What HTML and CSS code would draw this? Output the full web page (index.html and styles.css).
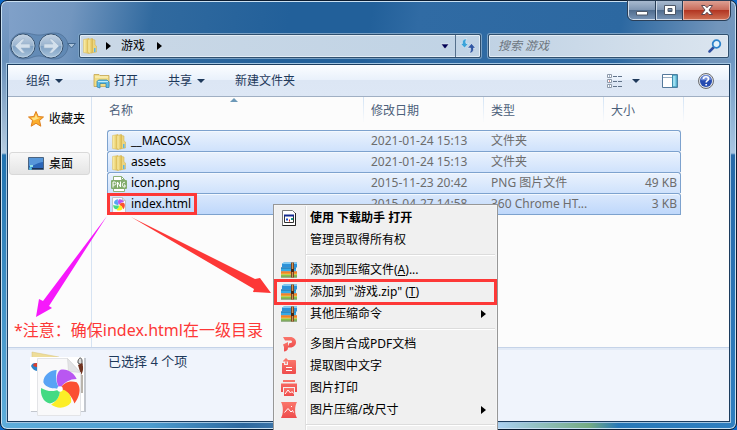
FILE: index.html
```html
<!DOCTYPE html>
<html lang="zh-CN">

<head>
    <meta charset="utf-8">
    <title>游戏</title>
    <link rel="stylesheet" href="styles.css">
</head>

<body>
    <!-- Shared icons -->
    <svg class="defs" width="0" height="0" aria-hidden="true">
        <defs>
            <linearGradient id="gold" x1="0" x2="1">
                <stop offset="0" stop-color="#fdf3b0" />
                <stop offset="1" stop-color="#dcb94c" />
            </linearGradient>
            <linearGradient id="glass" x1="0" y1="0" x2="0" y2="1">
                <stop offset="0" stop-color="#c3d2e3" />
                <stop offset="0.48" stop-color="#9ab4cf" />
                <stop offset="0.5" stop-color="#7d9fc2" />
                <stop offset="1" stop-color="#a9c4dc" />
            </linearGradient>
            <linearGradient id="coral" x1="0" y1="0" x2="0" y2="1">
                <stop offset="0" stop-color="#fa766b" />
                <stop offset="1" stop-color="#ee4c4c" />
            </linearGradient>
            <symbol id="folder" viewBox="0 0 16 16">
                <path d="M9 1l4 1v5l1.500 1v6L9 15z" fill="#ecd57e" stroke="#cfae4a" stroke-width=".5" />
                <path d="M1.500 1.500L7 .5v15l-5.500-1z" fill="url(#gold)" stroke="#d6b755" stroke-width=".5" />
                <path d="M6 1.500L10.500.5v14L7 15.500 6 14z" fill="url(#gold)" stroke="#d0b04c" stroke-width=".5" />
                <path d="M12 10h1.500v4H12z" fill="#5db4e4" />
            </symbol>
            <symbol id="books" viewBox="0 0 16 16">
                <path d="M1 1.500L3 .5h13v5H1z" fill="#2d92d8" />
                <path d="M1 1.500L3 .5h13v1.500H1z" fill="#7dcaf4" />
                <path d="M0 5.500h15v4H0z" fill="#36abe6" />
                <path d="M0 5.500h15v1H0z" fill="#1c6ba8" />
                <path d="M0 9.500h16v3H0z" fill="#f8a02c" />
                <path d="M0 9.500h16v1H0z" fill="#e0662a" />
                <path d="M0 12.500h16v2H0z" fill="#8cc63c" />
                <path d="M0 14.500h16v1H0z" fill="#44792a" />
                <path d="M10 .5h3v15h-3z" fill="#7c4520" />
                <path d="M11 .5h1v15h-1z" fill="#c9965a" />
                <path d="M10 7h3v3h-3z" fill="#4b2712" />
            </symbol>
            <symbol id="pinwheel" viewBox="0 0 36 36">
                <path d="M18 18C12 18 5 17 3 12 3 5 10 1 15 1c-1 6-1 12 3 17z" fill="#58a3f5" />
                <path d="M18 18C14 12 14 5 18 1c6-2 13 3 15 8-6 0-12 3-15 9z" fill="#b957f1" />
                <path d="M18 18c3-6 9-8 15-6 5 5 2 14-2 19-2-6-6-11-13-13z" fill="#fb5031" />
                <path d="M18 18c7 1 11 6 10 12-4 6-13 6-18 2 5-3 8-7 8-14z" fill="#fcee27" />
                <path d="M18 18c0 7-3 12-9 13-6-1-9-8-8-14 5 3 11 4 17 1z" fill="#43da83" />
                <circle cx="18" cy="18" r="2.5" fill="#fff" />
            </symbol>
        </defs>
    </svg>

    <div class="window">
        <header class="titlebar">
            <button class="caption minimize" aria-label="最小化">
                <svg width="12" height="12" viewBox="0 0 12 12"><path d="M.5 7.500h11v3.500H.5z" fill="#fff" stroke="#4e5868" /></svg>
            </button>
            <button class="caption maximize" aria-label="最大化">
                <svg width="12" height="12" viewBox="0 0 12 12"><path d="M.5 1.500h11v9H.5zM4 4.500v3h4v-3z" fill="#fff" fill-rule="evenodd" stroke="#4e5868" /></svg>
            </button>
            <button class="caption close" aria-label="关闭">
                <svg width="12" height="12" viewBox="0 0 12 12"><path d="M.5 1.500h3.500L6 3.700l2-2.200h3.500L8 6l3.500 4.500H8L6 8.300l-2 2.200H.5L4 6z" fill="#fff" stroke="#5b4750" /></svg>
            </button>
        </header>

        <div class="navbar">
            <div class="travel">
                <svg class="travel-back" width="60" height="28" viewBox="0 0 60 28">
                    <path d="M14 1c8 0 10 2 16 2s8-2 16-2c7 0 13 6 13 13s-6 13-13 13c-8 0-10-3-16-3s-8 3-16 3C7 27 1 21 1 14S7 1 14 1z" fill="#5580ad" fill-opacity=".6" stroke="#47698f" stroke-opacity=".6" />
                </svg>
                <button class="round" aria-label="后退">
                    <svg width="26" height="26" viewBox="0 0 26 26">
                        <circle cx="13" cy="13" r="12" fill="url(#glass)" stroke="#38526f" />
                        <circle cx="13" cy="13" r="11" fill="none" stroke="#c3d5e6" stroke-opacity=".7" />
                        <path d="M5 13l7-7h3l-4 5h9v4h-9l4 5h-3z" fill="#d3e0ec" stroke="#9db5cf" stroke-width=".6" />
                    </svg>
                </button>
                <button class="round" aria-label="前进">
                    <svg width="26" height="26" viewBox="0 0 26 26">
                        <circle cx="13" cy="13" r="12" fill="url(#glass)" stroke="#38526f" />
                        <circle cx="13" cy="13" r="11" fill="none" stroke="#c3d5e6" stroke-opacity=".7" />
                        <path d="M21 13l-7-7h-3l4 5H6v4h9l-4 5h3z" fill="#d3e0ec" stroke="#9db5cf" stroke-width=".6" />
                    </svg>
                </button>
                <button class="recent" aria-label="最近的页面">
                    <svg width="9" height="6" viewBox="0 0 9 6"><path d="M.5.500h8l-4 4.500z" fill="#a9c2d9" stroke="#42678e" /></svg>
                </button>
            </div>
            <div class="address">
                <svg width="16" height="16"><use href="#folder" /></svg>
                <svg width="5" height="8" viewBox="0 0 5 8"><path d="M0 0l5 4-5 4z" /></svg>
                <button class="crumb">游戏</button>
                <svg width="5" height="8" viewBox="0 0 5 8"><path d="M0 0l5 4-5 4z" /></svg>
                <button class="history" aria-label="以前的位置">
                    <svg width="10" height="7" viewBox="0 0 10 7"><path d="M1 1h8L5 6z" fill="#000054" stroke="#eef4f9" stroke-width=".6" /></svg>
                </button>
                <button class="refresh" aria-label="刷新">
                    <svg width="16" height="16" viewBox="0 0 16 16">
                        <path d="M6 1C3 1 2 3 2.500 5.500H.5L4.500 10l4-4.500H6C5.500 4 5.500 2.500 7 1z" fill="#3ba3d9" stroke="#f2f8fc" stroke-width=".5" />
                        <path d="M9 15c3.500 0 5-2 4.500-5h2L11.500 5.500l-4 4.500h3c.5 2 .3 3.500-1.500 5z" fill="#3057a3" stroke="#f2f8fc" stroke-width=".5" />
                    </svg>
                </button>
            </div>
            <form class="search">
                <input type="search" aria-label="搜索 游戏" placeholder="搜索 游戏">
                <button type="button" aria-label="搜索">
                    <svg width="14" height="14" viewBox="0 0 14 14">
                        <path d="M1.500 12.500L6 8" stroke="#2f4fa0" stroke-width="2.500" stroke-linecap="round" />
                        <circle cx="8.500" cy="5" r="3.800" fill="#e4f2fb" stroke="#2d83cb" stroke-width="1.800" />
                    </svg>
                </button>
            </form>
        </div>

        <main class="client">
            <div class="toolbar">
                <button>组织 <i class="caret"></i></button>
                <button class="open">
                    <svg width="17" height="16" viewBox="0 0 17 16">
                        <path d="M1 1.500h5l1 1h9v11H1z" fill="#f1dd85" stroke="#c4a450" stroke-width=".8" />
                        <path d="M2 4h13" stroke="#fff8cf" />
                        <path d="M4 14V8.500L5.500 7H14l2 2v5.500h-3V10.500H7V15z" fill="#5fbce6" stroke="#2a7ca9" stroke-width=".7" />
                        <path d="M5 8.500h10" stroke="#c0ecfb" />
                    </svg>
                    打开
                </button>
                <button class="share">共享 <i class="caret"></i></button>
                <button class="new">新建文件夹</button>
                <div class="tools">
                    <button class="view" aria-label="更改您的视图">
                        <svg width="16" height="14" viewBox="0 0 16 14">
                            <path d="M.5.500h4v3h-4zM.5 5.500h4v3h-4zM.5 10.500h4v3h-4z" fill="#fff" stroke="#8d99a9" />
                            <path d="M2 2h1M2 12h1" stroke="#466b94" />
                            <path d="M2 7h1" stroke="#c03d35" />
                            <path d="M6 2.500h4M11 2.500h4M6 7.500h4M11 7.500h4M6 12.500h4M11 12.500h4" stroke="#61738a" />
                        </svg>
                        <i class="caret"></i>
                    </button>
                    <button class="preview" aria-label="显示预览窗格">
                        <svg width="16" height="14" viewBox="0 0 16 14">
                            <path d="M.5.500h15v13H.5z" fill="#fff" stroke="#55799b" />
                            <path d="M1 3.500h9" stroke="#9aafc3" />
                            <path d="M10.500 1h4.500v12h-4.500z" fill="#78cce6" stroke="#3c8cad" />
                            <path d="M12 2v10" stroke="#c3f0fa" />
                        </svg>
                    </button>
                    <button class="help" aria-label="获取帮助">
                        <svg width="16" height="16" viewBox="0 0 16 16">
                            <circle cx="8" cy="8" r="7.500" fill="#dce1e8" stroke="#6c6d70" />
                            <circle cx="8" cy="8" r="6" fill="#264bb0" />
                            <path d="M3 7a5 5 0 0 1 10 0c-4-1-6 1-10 0z" fill="#7793db" />
                            <path d="M5.500 6c0-3 5-3 5 0 0 1.800-2.300 1.500-2.300 3.500M8.200 11v1.500" fill="none" stroke="#fff" stroke-width="1.700" />
                        </svg>
                    </button>
                </div>
            </div>

            <div class="content">
                <nav class="sidebar">
                    <a class="favorites" href="#">
                        <svg width="16" height="16" viewBox="0 0 16 16">
                            <path d="M8 .5l2.200 5 5.300.5-4 3.500 1.300 5.700L8 12.300l-4.800 2.900 1.300-5.700-4-3.500 5.300-.5z" fill="#fbae2d" stroke="#de7f1e" />
                            <path d="M8 3l1.300 3.500 3.200.3-6.800 2.700-2.500-2.700 3.400-.3z" fill="#ffe386" />
                        </svg>
                        收藏夹
                    </a>
                    <a class="desktop" href="#">
                        <svg width="16" height="14" viewBox="0 0 16 14">
                            <path d="M.5.500h15v12H.5z" fill="#2b66b8" stroke="#4b6480" />
                            <path d="M1 1h14v4C10 5 7 9 1 9z" fill="#5797da" />
                            <path d="M1 11h14v1H1z" fill="#1c3354" />
                            <path d="M2 8h3v2H2z" fill="#8fe0e6" />
                            <circle cx="2.500" cy="11.500" r="1.500" fill="#57c3e8" />
                        </svg>
                        桌面
                    </a>
                </nav>

                <section class="files">
                    <table>
                        <thead>
                            <tr>
                                <th class="name">名称</th>
                                <th class="date">修改日期</th>
                                <th class="type">类型</th>
                                <th class="size">大小</th>
                            </tr>
                        </thead>
                        <tbody>
                            <tr>
                                <td><svg width="16" height="16"><use href="#folder" /></svg>__MACOSX</td>
                                <td>2021-01-24 15:13</td>
                                <td>文件夹</td>
                                <td></td>
                            </tr>
                            <tr>
                                <td><svg width="16" height="16"><use href="#folder" /></svg>assets</td>
                                <td>2021-01-24 15:13</td>
                                <td>文件夹</td>
                                <td></td>
                            </tr>
                            <tr>
                                <td><svg width="16" height="16" viewBox="0 0 16 16">
                                        <path d="M2.500.500h8l3 3v12h-11z" fill="#fff" stroke="#8db078" />
                                        <path d="M10.500.500v3h3" fill="none" stroke="#8db078" />
                                        <rect y="4" width="16" height="9" rx="1" fill="#82ac6b" />
                                        <path d="M2 11.500V6h1.500a1.200 1.200 0 0 1 0 3H2M6.500 11.500V6l3 5V5.500M14 6.500c-3-1.500-3.500 5-.5 4.500h.5V9h-1" fill="none" stroke="#fff" />
                                    </svg>icon.png</td>
                                <td>2015-11-23 20:42</td>
                                <td>PNG 图片文件</td>
                                <td>49 KB</td>
                            </tr>
                            <tr class="focused">
                                <td><svg width="16" height="16" viewBox="0 0 16 16">
                                        <path d="M1.500.500h10l3 3v12h-13z" fill="#fbfbfb" stroke="#c0c5cc" />
                                        <path d="M11.500.500v3h3" fill="#ddd" stroke="#c0c5cc" />
                                        <use href="#pinwheel" x="2" y="2" width="12" height="12" />
                                    </svg>index.html</td>
                                <td>2015-04-27 14:58</td>
                                <td>360 Chrome HT...</td>
                                <td>3 KB</td>
                            </tr>
                        </tbody>
                    </table>
                </section>
            </div>

            <footer class="details">
                <svg width="58" height="66" viewBox="0 0 58 66">
                    <path d="M4 1l27 5v8H4z" fill="#eedd9a" stroke="#d8c377" stroke-width=".5" />
                    <path d="M3 7h55v54H3z" fill="#c3c7ce" />
                    <path d="M2 6h54v54H2z" fill="#fff" />
                    <path d="M3 15c2-4 5-3 7-2v7c-3 0-6-2-7-5z" fill="#2c83c9" />
                    <path d="M5 14c1-2 3-2 5-2v4c-2 0-4 0-5-2z" fill="#d9402f" />
                    <path d="M50 10c1-4 4-4 4 0v4l-4-2z" fill="#ddd" stroke="#555" />
                    <path d="M50 14l4-2c2 4 1 9-1 12z" fill="#703321" />
                    <path d="M54 24v18" stroke="#a29b91" stroke-width="1.500" />
                    <path d="M9.500 7.500h30l13 14v43h-43z" fill="#f9f9fa" stroke="#e3e4e7" />
                    <path d="M39.500 7.500l1 13 12 1z" fill="#e3e4e6" stroke="#ccc" stroke-width=".5" />
                    <use href="#pinwheel" x="12" y="18" width="40" height="40" />
                </svg>
                <span>已选择 4 个项</span>
            </footer>
        </main>
    </div>

    <div class="menu" role="menu">
        <button role="menuitem" class="default">
            <svg width="16" height="16" viewBox="0 0 16 16">
                <path d="M1.500.500h10l3 3v12h-13z" fill="#fff" stroke="#777" />
                <path d="M14.500 3v12.500h-13" fill="none" stroke="#222" />
                <path d="M3.500 5.500h9v7h-9z" fill="#fff" stroke="#333" />
                <path d="M3 5.500h10" stroke="#142b91" stroke-width="2" />
                <path d="M5 9.500h2" stroke="#1b4fd1" stroke-width="2" />
                <path d="M8 10.500h1" stroke="#d1231b" stroke-width="2" />
                <path d="M10 9h2" stroke="#159a85" stroke-width="2" />
            </svg>
            <span>使用 下载助手 打开</span>
        </button>
        <button role="menuitem" class="no-icon"><span>管理员取得所有权</span></button>
        <hr>
        <button role="menuitem"><svg width="16" height="16"><use href="#books" /></svg><span>添加到压缩文件(<u>A</u>)...</span></button>
        <button role="menuitem" class="marked"><svg width="16" height="16"><use href="#books" /></svg><span>添加到 "游戏.zip" (<u>T</u>)</span></button>
        <button role="menuitem" class="submenu"><svg width="16" height="16"><use href="#books" /></svg><span>其他压缩命令</span></button>
        <hr>
        <button role="menuitem">
            <svg width="16" height="16" viewBox="0 0 16 16">
                <path d="M2 1h7c8 0 8 10.500 0 10.500H6.500l2-4.500h1c2 0 2-2.500 0-2.500H4z" fill="url(#coral)" />
                <path d="M2 8.500L7 6v6c0 2-2 3.500-4 3.500V11z" fill="url(#coral)" />
            </svg>
            <span>多图片合成PDF文档</span>
        </button>
        <button role="menuitem">
            <svg width="16" height="16" viewBox="0 0 16 16">
                <path d="M1 5h2v2h4V2h7a1 1 0 0 1 1 1v12a1 1 0 0 1-1 1H2a1 1 0 0 1-1-1z" fill="url(#coral)" />
                <path d="M5 6V1M2.500 3.500L5 1l2.500 2.500" fill="none" stroke="#fa766b" stroke-width="1.500" />
                <path d="M5 9.500h6M5 12.500h6" stroke="#fff" />
            </svg>
            <span>提取图中文字</span>
        </button>
        <button role="menuitem">
            <svg width="16" height="16" viewBox="0 0 16 16">
                <path d="M2 0h12v2H2zM0 3.500h16V12h-2V7H2v5H0z" fill="url(#coral)" />
                <path d="M3 8h10v8H3z" fill="url(#coral)" />
                <path d="M4 14l3-4 2.500 3L11 11.500l1.500 2" fill="none" stroke="#fff" />
            </svg>
            <span>图片打印</span>
        </button>
        <button role="menuitem" class="submenu">
            <svg width="16" height="16" viewBox="0 0 16 16">
                <path d="M0 0h16c-2.500 4-2.500 12 0 16H0c2.500-4 2.500-12 0-16z" fill="url(#coral)" />
                <path d="M3.500 10.500l3.500-4 3 3.500 1.500-1.500 1 2M10 4.500h1" fill="none" stroke="#fff" />
            </svg>
            <span>图片压缩/改尺寸</span>
        </button>
        <hr>
    </div>

    <!-- Notes drawn over the window -->
    <svg class="arrows" width="280" height="330" viewBox="0 0 280 330">
        <path d="M107 216L49 306l3 2-16 9 3-18 4 2z" fill="#f619fb" />
        <path d="M131 217l124 62 5-1 11 15-18-1 1-3z" fill="#fd3837" />
    </svg>
    <div class="file-mark"></div>
    <p class="note">*注意：确保index.html在一级目录</p>
</body>

</html>
```

FILE: styles.css
```css
* {
    box-sizing: border-box;
}

body {
    margin: 0;
    height: 100vh;
    overflow: hidden;
    position: relative;
    background: #0b66c4;
    color: #000;
    font: 12px/16px "Noto Sans", "Noto Sans CJK SC", sans-serif;
}

button,
input {
    margin: 0;
    padding: 0;
    border: 0;
    background: none;
    color: inherit;
    font: inherit;
}

svg {
    flex: none;
}

.defs {
    position: absolute;
}

/* Window frame */
.window {
    height: 100vh;
    padding: 0 6px 7px;
    display: flex;
    flex-direction: column;
    border: 1px solid #0c1c30;
    border-radius: 7px;
    box-shadow: inset 0 0 0 1px #c9e0f2;
    background:
        linear-gradient(90deg, #5faedb 0, #4d9dd0 20%, #2d689f 33%, #a9cfee 68%, #74ab83 80%, #2878b8 84%, #2f7fc0 100%) bottom / 100% 8px no-repeat,
        linear-gradient(180deg, #7f9fc8 0, #6890ba 60px, #b6cce0 152px, #2273b0 154px, #5faedb 100%) left / 8px 100% no-repeat,
        linear-gradient(180deg, #7797bb 0, #6d97c2 60px, #a9c6e2 152px, #2669a8 154px, #2f7fc0 100%) right / 8px 100% no-repeat,
        linear-gradient(100deg, #82a2ca 0, #7296bf 9%, #316a9f 19%, #22609a 36%, #22609a 46%, #306ba4 52%, #2c68a1 77%, #7295bb 89%, #7899bd 100%);
}

.titlebar {
    height: 32px;
    display: flex;
    justify-content: flex-end;
    align-items: flex-start;
}

.caption {
    width: 28px;
    height: 19px;
    display: flex;
    align-items: center;
    justify-content: center;
    border: 1px solid #d0dcea;
    border-top: 0;
    outline: 1px solid #293e57;
    background: linear-gradient(#a7b9cf 0, #8097b4 48%, #4d6a8c 50%, #7591b3 100%);
}

.minimize {
    border-radius: 0 0 0 5px;
}

.maximize {
    width: 27px;
}

.close {
    width: 47px;
    border-color: #e8b2a5;
    border-radius: 0 0 5px 0;
    background: linear-gradient(#dda093 0, #c96d5c 48%, #b13320 50%, #cd6c50 100%);
}

/* Navigation row */
.navbar {
    height: 31px;
    padding: 0 1px 5px 2px;
    display: flex;
    align-items: center;
}

.travel {
    width: 70px;
    display: flex;
    align-items: center;
    gap: 2px;
    position: relative;
}

.travel-back {
    position: absolute;
    left: 0;
}

.round {
    display: flex;
    position: relative;
}

.round:first-of-type {
    margin-left: 1px;
}

.recent {
    margin-left: 1px;
    display: flex;
}

.address,
.search {
    height: 24px;
    display: flex;
    align-items: center;
    border: 1px solid #30506f;
    border-radius: 2px;
    box-shadow: inset 0 0 0 1px #e3edf6, 0 0 0 1px #7ba1c4;
    background: linear-gradient(90deg, #cad8e6, #c0d3e5);
}

.address {
    flex: 1;
    padding-left: 2px;
}

.crumb {
    margin: 0 12px 0 10px;
}

.address svg + svg {
    margin-left: 8px;
}

.history {
    width: 20px;
    margin-left: auto;
    display: flex;
    justify-content: center;
}

.refresh {
    width: 25px;
    height: 22px;
    display: flex;
    align-items: center;
    justify-content: center;
    border-left: 1px solid #55708c;
}

.search {
    width: 241px;
    margin-left: 7px;
    padding: 0 6px 0 9px;
    background: linear-gradient(90deg, #c0d2e4, #dbe5ef);
}

.search input {
    flex: 1;
    min-width: 0;
    font-style: italic;
}

.search input::placeholder {
    color: #6d7680;
}

.search button {
    display: flex;
}

/* Client area */
.client {
    flex: 1;
    min-height: 0;
    display: flex;
    flex-direction: column;
    border: 1px solid #1b3c5e;
    box-shadow: 0 0 0 1px #a4c6e2;
    background: #fcfcfc;
}

.toolbar {
    height: 32px;
    padding: 0 15px 0 18px;
    display: flex;
    align-items: center;
    border-bottom: 1px solid #a0afc3;
    background: linear-gradient(#fbfdff 0, #e9f1fb 48%, #dce6f4 50%, #dde7f5 100%);
    color: #1e395b;
}

.toolbar button {
    display: flex;
    align-items: center;
    gap: 5px;
}

.caret {
    border: 4px solid transparent;
    border-top-color: #1e395b;
    border-bottom: 0;
}

.toolbar .open {
    margin-left: 30px;
    gap: 4px;
}

.toolbar .share {
    margin-left: 30px;
}

.toolbar .new {
    margin-left: 30px;
}

.tools {
    margin-left: auto;
    display: flex;
    align-items: center;
    gap: 20px;
}

.toolbar .view {
    gap: 9px;
    margin-right: 2px;
}

.content {
    flex: 1;
    min-height: 0;
    display: flex;
}

.sidebar {
    width: 84px;
    padding: 10px 1px;
    border-right: 1px solid #d6e3f2;
}

.sidebar a {
    height: 23px;
    padding-left: 18px;
    display: flex;
    align-items: center;
    gap: 5px;
    border: 1px solid transparent;
    border-radius: 3px;
    color: #000;
    text-decoration: none;
    white-space: nowrap;
}

.sidebar .desktop {
    margin-top: 22px;
    border-color: #d9d9d9;
    background: linear-gradient(#f8f8f8, #e5e5e5);
}

.files {
    padding-left: 15px;
}

.files table {
    width: 574px;
    table-layout: fixed;
    border-spacing: 0;
}

.files th {
    height: 33px;
    padding: 6px 7px;
    position: relative;
    color: #4c607a;
    font-weight: normal;
    text-align: left;
    vertical-align: top;
}

.files th::after {
    content: "";
    position: absolute;
    top: 0;
    right: 0;
    width: 1px;
    height: 26px;
    background: linear-gradient(#d2e3f5, #fcfcfc);
}

.files .size::after {
    right: -3px;
}

.files .name {
    width: 257px;
    padding-left: 2px;
}

/* Sort direction */
.files .name::before {
    content: "";
    position: absolute;
    top: 1px;
    left: 123px;
    border: 4px solid transparent;
    border-top: 0;
    border-bottom-color: #6d99b8;
}

.files .date,
.files .type {
    width: 120px;
}

.files td {
    height: 21px;
    padding: 0 7px;
    border-top: 1px solid #7da2ce;
    box-shadow: inset 0 1px #f3f8fe;
    background: linear-gradient(#eaf2fd, #cfe2fc);
    color: #6d6d6d;
    line-height: 18px;
    white-space: nowrap;
}

.files td:first-child {
    padding-left: 3px;
    border-left: 1px solid #7da2ce;
    border-radius: 3px 0 0 0;
    color: #000;
}

.files td:last-child {
    padding-right: 3px;
    border-right: 1px solid #7da2ce;
    border-radius: 0 3px 0 0;
    text-align: right;
}

.files td svg {
    margin-right: 4px;
    vertical-align: middle;
}

.files .focused td {
    height: 22px;
    border-bottom: 1px solid #7da2ce;
    background: linear-gradient(#dae8fc, #bfd8fb);
}

.details {
    height: 74px;
    padding: 3px 20px;
    display: flex;
    gap: 22px;
    border-top: 1px solid #c5d3e8;
    box-shadow: inset 0 2px #e2eaf6;
    background: #f0f4fc;
    color: #1e395b;
    font-size: 13px;
    line-height: 20px;
}

/* Context menu */
.menu {
    position: absolute;
    top: 204px;
    left: 273px;
    width: 225px;
    padding: 2px;
    border: 1px solid #979797;
    background: linear-gradient(90deg, #f0f0f0 31px, #dedede 31px, #dedede 32px, #fff 32px, #fff 33px, #f0f0f0 33px);
    box-shadow: inset 0 0 0 1px #f5f5f5;
}

.menu button {
    width: 100%;
    height: 22px;
    padding-left: 5px;
    display: flex;
    align-items: center;
    gap: 13px;
    white-space: nowrap;
    text-align: left;
}

.menu .no-icon {
    padding-left: 34px;
}

.menu .default {
    font-weight: bold;
}

.menu .submenu::after {
    content: "";
    margin: 0 9px 0 auto;
    border: 4px solid transparent;
    border-left: 5px solid #000;
    border-right: 0;
}

.menu .marked {
    outline: 3px solid #fd3837;
    outline-offset: -1px;
}

.menu hr {
    height: 2px;
    margin: 3px 0 3px 30px;
    border: 0;
    border-top: 1px solid #dcdcdc;
    border-bottom: 1px solid #fff;
}

/* Notes */
.arrows {
    position: absolute;
    top: 0;
    left: 0;
    pointer-events: none;
}

.file-mark {
    position: absolute;
    top: 193px;
    left: 107px;
    width: 90px;
    height: 22px;
    border: 3px solid #fd3837;
}

.note {
    position: absolute;
    top: 318px;
    left: 14px;
    margin: 0;
    color: #fd3837;
    font-size: 16px;
    line-height: 24px;
}
```
